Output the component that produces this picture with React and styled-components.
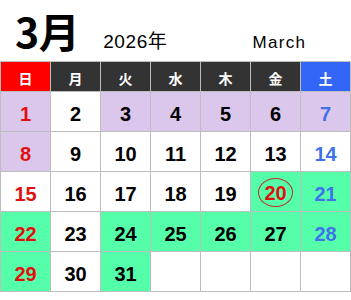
import styled, { createGlobalStyle } from 'styled-components';

const GlobalStyle = createGlobalStyle`
    html, body {
        margin: 0;
        padding: 0;
        background: #fff;
    }
    body {
        font-family: "Liberation Sans", "Noto Sans CJK JP", sans-serif;
    }
`;

const WEEKDAYS = ['日', '月', '火', '水', '木', '金', '土'];

// bg: w = white, p = purple, g = green
const DAYS = [
    [1, 'p'], [2, 'w'], [3, 'p'], [4, 'p'], [5, 'p'], [6, 'p'], [7, 'p'],
    [8, 'p'], [9, 'w'], [10, 'w'], [11, 'w'], [12, 'w'], [13, 'w'], [14, 'w'],
    [15, 'w'], [16, 'w'], [17, 'w'], [18, 'w'], [19, 'w'], [20, 'g'], [21, 'g'],
    [22, 'g'], [23, 'w'], [24, 'g'], [25, 'g'], [26, 'g'], [27, 'g'], [28, 'g'],
    [29, 'g'], [30, 'w'], [31, 'g'], [null, 'w'], [null, 'w'], [null, 'w'], [null, 'w'],
];

const TODAY = 20;

const App = () => {
    return (
        <>
            <GlobalStyle />
            <Calendar>
                <TitleBar>
                    <Month>3月</Month>
                    <Year>2026年</Year>
                    <English>March</English>
                </TitleBar>
                <Grid>
                    {WEEKDAYS.map((d, i) => (
                        <HeadCell key={d} $col={i}>{d}</HeadCell>
                    ))}
                    {DAYS.map(([n, bg], i) => (
                        <DayCell key={i} $bg={bg} $col={i % 7}>
                            {n === TODAY ? <Today>{n}</Today> : n}
                        </DayCell>
                    ))}
                </Grid>
            </Calendar>
        </>
    );
}

//Styled Components
const Calendar = styled.div`
    width: 351px;
`

const TitleBar = styled.div`
    height: 61px;
    display: flex;
    align-items: baseline;
    padding-left: 15px;
    box-sizing: border-box;
`

const Month = styled.div`
    font-family: "Noto Sans CJK JP", sans-serif;
    font-size: 41px;
    font-weight: 700;
    line-height: 61px;
    letter-spacing: -0.5px;
    color: #000;
`

const Year = styled.div`
    font-family: "Liberation Sans", "Noto Sans CJK JP", sans-serif;
    font-size: 19px;
    margin-left: 24px;
    letter-spacing: 0.6px;
    color: #000;
`

const English = styled.div`
    font-family: "Liberation Sans", sans-serif;
    font-size: 17px;
    margin-left: 85px;
    letter-spacing: 1.3px;
    color: #000;
`

const Grid = styled.div`
    display: grid;
    grid-template-columns: repeat(7, 49px);
    grid-template-rows: 29px repeat(5, 39px);
    gap: 1px;
    padding: 1px;
    background: #bdbdbd;
`

const headBg = ( col ) => col === 0 ? '#ff0000' : col === 6 ? '#3366f6' : '#333333';

const HeadCell = styled.div`
    background: ${p => headBg( p.$col )};
    color: #fff;
    display: flex;
    align-items: center;
    justify-content: center;
    padding-top: 3px;
    box-sizing: border-box;
    font-family: "Noto Sans CJK JP", sans-serif;
    font-size: 14px;
    font-weight: 700;
`

const cellBg = { w: '#ffffff', p: '#dbc6ec', g: '#55ffaa' };
const numColor = ( col ) => col === 0 ? '#e01010' : col === 6 ? '#3f72ea' : '#000000';

const DayCell = styled.div`
    background: ${p => cellBg[p.$bg]};
    color: ${p => numColor( p.$col )};
    display: flex;
    align-items: center;
    justify-content: center;
    padding-top: 6px;
    box-sizing: border-box;
    font-family: "Liberation Sans", sans-serif;
    font-size: 20px;
    font-weight: 700;
`

const Today = styled.span`
    display: flex;
    align-items: center;
    justify-content: center;
    width: 35px;
    height: 29px;
    margin-top: -5px;
    padding-top: 2px;
    box-sizing: border-box;
    border: 1px solid #b8332a;
    border-radius: 50%;
    color: #e01010;
`

export default App;
